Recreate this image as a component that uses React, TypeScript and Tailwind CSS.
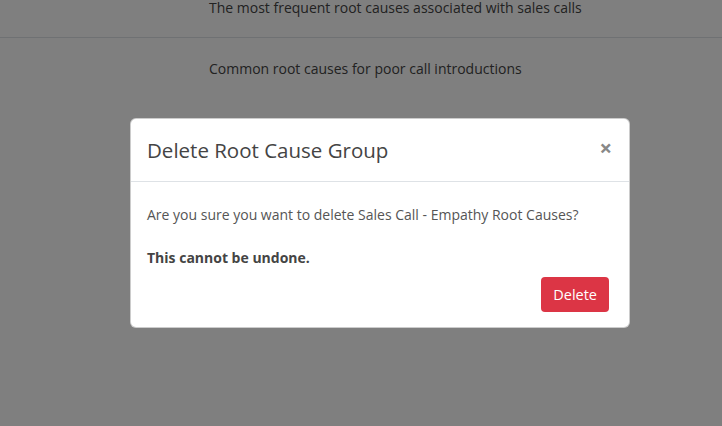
import React from 'react';

const groups = [
  { desc: 'The most frequent root causes associated with sales calls' },
  { desc: 'Common root causes for poor call introductions' },
];

export default function App() {
  return (
    <div className="relative w-[722px] h-[426px] overflow-hidden bg-white text-[#333] font-['Open_Sans',sans-serif]">
      {/* Page behind the modal */}
      <div className="flex flex-col -mt-[23px]">
        {groups.map((g, i) => (
          <div key={i} className="h-[61px] flex items-center pl-[209px] border-b border-[#dee2e6] text-[14px] text-[#444] last:border-b-0">
            {g.desc}
          </div>
        ))}
      </div>

      {/* Backdrop */}
      <div className="absolute inset-0 bg-black/50" />

      {/* Modal */}
      <div className="absolute left-[130px] top-[118px] w-[500px] bg-white rounded-[6px] border border-black/20 flex flex-col">
        <div className="flex items-center justify-between pl-[16px] pr-[17px] h-[63px] border-b border-[#dee2e6]">
          <h5 className="text-[20.5px] font-medium text-[#444] leading-none">Delete Root Cause Group</h5>
          <button className="text-[22px] font-bold leading-none text-[#888] -mt-[6px]">×</button>
        </div>
        <div className="px-[16px] pt-[22px] text-[14px] leading-[21px] text-[#555]">
          <p className="mb-[22px]">Are you sure you want to delete Sales Call - Empathy Root Causes?</p>
          <p className="font-bold text-[#444]">This cannot be undone.</p>
        </div>
        <div className="flex justify-end px-[20px] pt-[9px] pb-[15px]">
          <button className="h-[35px] px-[12px] rounded-[4px] bg-[#dc3545] text-white text-[14.5px]">Delete</button>
        </div>
      </div>
    </div>
  );
}
